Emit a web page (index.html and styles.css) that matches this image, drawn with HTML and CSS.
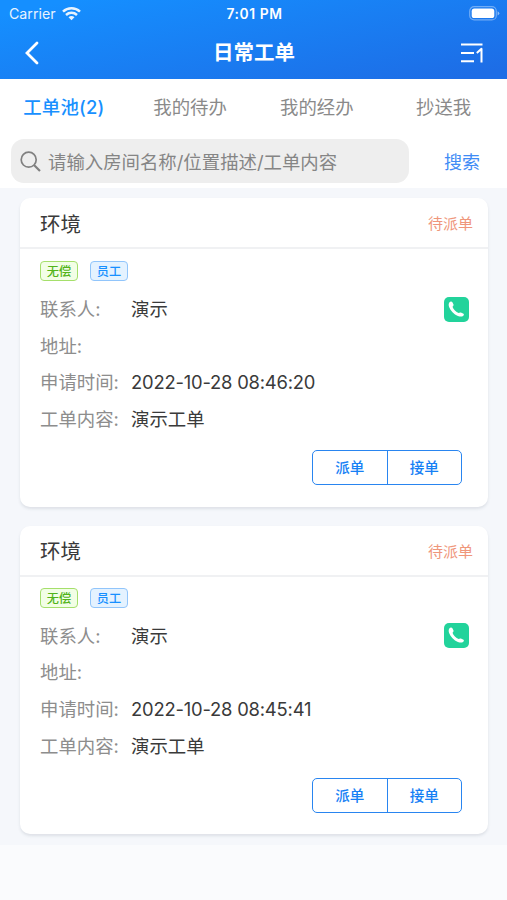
FILE: index.html
```html
<!DOCTYPE html>
<html lang="zh-CN">
<head>
<meta charset="utf-8">
<meta name="viewport" content="width=device-width, initial-scale=1">
<title>日常工单</title>
<link rel="stylesheet" href="styles.css">
</head>
<body>
<header class="header">
  <div class="status">
    <div class="carrier">
      <span>Carrier</span>
      <svg width="19" height="14" viewBox="0 0 19 14" fill="none" stroke="#fff" stroke-width="2.5"><path d="M1 4.700C5.800.2 13.200.2 18 4.700M4 8C7.200 5.100 11.800 5.100 15 8"/><path d="M6.500 10.200C8.300 8.700 10.700 8.700 12.500 10.200L9.500 13.300Z" fill="#fff" stroke="none"/></svg>
    </div>
    <span class="clock">7:01 PM</span>
    <svg class="battery" width="31" height="15" viewBox="0 0 31 15"><rect x=".7" y=".7" width="26.600" height="13.200" rx="4.500" fill="none" stroke="#fff" stroke-opacity=".38" stroke-width="1.200"/><rect x="2.700" y="2.600" width="22.600" height="9.400" rx="2.600" fill="#fff"/><path d="M28.600 5.200Q30.300 6 30.300 7.300T28.600 9.400Z" fill="#fff" opacity=".5"/></svg>
  </div>
  <div class="nav">
    <svg class="back" width="14" height="24" viewBox="0 0 14 24" fill="none" stroke="#fff" stroke-width="2.800" stroke-linecap="round"><path d="M12 2L2 12L12 22"/></svg>
    <h1 class="title">日常工单</h1>
    <svg class="sort" width="24" height="20" viewBox="0 0 24 20" fill="none" stroke="#fff" stroke-width="2" stroke-linejoin="round"><path d="M1 1.500H22.500M1 10H14M1 18.300H14M16.800 10L21.500 5.800V19.500"/></svg>
  </div>
</header>
<nav class="tabs">
  <span class="tab active">工单池(2)</span>
  <span class="tab">我的待办</span>
  <span class="tab">我的经办</span>
  <span class="tab">抄送我</span>
</nav>
<div class="search">
  <div class="field">
    <svg width="21" height="21" viewBox="0 0 21 21" fill="none" stroke="#808080" stroke-width="1.700"><circle cx="8.700" cy="8.700" r="7.500"/><path d="M14 14L20 20" stroke-width="2.200"/></svg>
    <span>请输入房间名称/位置描述/工单内容</span>
  </div>
  <span class="go">搜索</span>
</div>
<main class="list">
  <article class="card">
    <div class="card-head"><h2 class="kind">环境</h2><span class="state">待派单</span></div>
    <div class="tags"><span class="tag green">无偿</span><span class="tag blue">员工</span></div>
    <dl class="rows">
      <div class="row"><dt>联系人:</dt><dd>演示</dd><svg class="phone" width="25" height="25" viewBox="0 0 25 25"><rect width="25" height="25" rx="5" fill="#22d39b"/><path d="M5.300 5.500C6.200 4.300 7.700 4.300 8.400 5.200L9.500 7.600C9.800 8.400 9.300 9 8.500 9.800C9.400 12.500 12 15.200 14.600 16.100C15.400 15.500 16.100 15.300 16.900 15.500L19.500 16.700C20.200 17.300 20 18.300 19 19C17.700 19.900 15.900 19.700 13.900 18.900C9.900 17.200 6.500 13.800 5.100 9.900C4.500 8.200 4.500 6.700 5.300 5.500Z" fill="#fff"/></svg></div>
      <div class="row"><dt>地址:</dt><dd></dd></div>
      <div class="row"><dt>申请时间:</dt><dd class="date">2022-10-28 08:46:20</dd></div>
      <div class="row"><dt>工单内容:</dt><dd>演示工单</dd></div>
    </dl>
    <div class="actions"><span class="btn">派单</span><span class="btn">接单</span></div>
  </article>
  <article class="card">
    <div class="card-head"><h2 class="kind">环境</h2><span class="state">待派单</span></div>
    <div class="tags"><span class="tag green">无偿</span><span class="tag blue">员工</span></div>
    <dl class="rows">
      <div class="row"><dt>联系人:</dt><dd>演示</dd><svg class="phone" width="25" height="25" viewBox="0 0 25 25"><rect width="25" height="25" rx="5" fill="#22d39b"/><path d="M5.300 5.500C6.200 4.300 7.700 4.300 8.400 5.200L9.500 7.600C9.800 8.400 9.300 9 8.500 9.800C9.400 12.500 12 15.200 14.600 16.100C15.400 15.500 16.100 15.300 16.900 15.500L19.500 16.700C20.200 17.300 20 18.300 19 19C17.700 19.900 15.900 19.700 13.900 18.900C9.900 17.200 6.500 13.800 5.100 9.900C4.500 8.200 4.500 6.700 5.300 5.500Z" fill="#fff"/></svg></div>
      <div class="row"><dt>地址:</dt><dd></dd></div>
      <div class="row"><dt>申请时间:</dt><dd class="date">2022-10-28 08:45:41</dd></div>
      <div class="row"><dt>工单内容:</dt><dd>演示工单</dd></div>
    </dl>
    <div class="actions"><span class="btn">派单</span><span class="btn">接单</span></div>
  </article>
</main>
</body>
</html>
```
FILE: styles.css
```css
* { box-sizing: border-box; }
body {
  margin: 0;
  min-height: 900px;
  background: #fafbfd;
  font-family: Inter, "Noto Sans CJK SC", sans-serif;
  color: #3a3a3a;
}
h1, h2, dl, dt, dd { margin: 0; }
svg { display: block; flex: none; }
.header {
  height: 79px;
  color: #fff;
  background: linear-gradient(168deg, #158fff 8%, #1d6de6 94%);
}
.status, .nav {
  display: grid;
  grid-template-columns: 1fr auto 1fr;
  align-items: center;
}
.status { height: 27px; padding: 0 7px 0 9px; }
.carrier { display: flex; align-items: center; gap: 6px; font-size: 14.2px; opacity: .9; }
.clock { font-size: 13.8px; font-weight: 600; letter-spacing: .6px; }
.battery { justify-self: end; }
.nav { height: 51px; padding: 0 23px 0 24px; }
.back { margin-left: 1px; }
.title { font-size: 20.5px; line-height: 30px; font-weight: 700; }
.sort { justify-self: end; }
.tabs {
  display: grid;
  grid-template-columns: repeat(4, 1fr);
  align-items: center;
  height: 60px;
  padding-bottom: 5px;
  background: #fff;
  text-align: center;
  font-size: 18.4px;
  line-height: 28px;
  color: #8a8a8a;
}
.active { padding-left: 1px; color: #1890ff; font-weight: 500; letter-spacing: .2px; }
.search {
  display: flex;
  align-items: center;
  height: 49px;
  padding: 0 0 5px 11px;
  background: #fff;
}
.field {
  display: flex;
  align-items: center;
  gap: 7px;
  width: 398px;
  height: 44px;
  padding-left: 9px;
  border-radius: 13px;
  background: #eee;
  color: #858585;
  font-size: 18.4px;
  white-space: nowrap;
}
.go { flex: 1; padding-left: 8px; text-align: center; color: #3f8cf5; font-size: 18px; }
.list {
  display: grid;
  gap: 19px;
  height: 657px;
  padding: 10px 19px 0 20px;
  align-content: start;
  background: #f5f7fb;
}
.card {
  height: 308.5px;
  border-radius: 10px;
  background: #fff;
  box-shadow: 0 2px 3px rgba(60, 70, 90, .12);
}
.card-head {
  display: flex;
  align-items: center;
  justify-content: space-between;
  height: 51px;
  padding: 0 15px 0 20px;
  border-bottom: 2px solid #f0f1f3;
}
.kind { font-size: 20.5px; font-weight: 400; }
.card + .card .kind { margin-top: -1px; }
.state { color: #ef967b; font-size: 15px; }
.tags { display: flex; gap: 12px; padding: 12px 20px 10px; }
.card + .card .tags { padding: 11.500px 20px 9.500px; }
.tag {
  width: 38px;
  height: 20px;
  border: 1px solid;
  border-radius: 4px;
  text-align: center;
  font-size: 12.2px;
  line-height: 19px;
  font-weight: 500;
}
.green { color: #52b41a; background: #f2fee6; border-color: #a5df6b; }
.blue { color: #1890ff; background: #e4f2ff; border-color: #91c5fb; }
.row {
  display: flex;
  align-items: center;
  height: 36.6px;
  padding: 0 19px 0 20px;
  font-size: 18.4px;
  line-height: 28px;
  white-space: nowrap;
}
.row dt { width: 91px; color: #8d8d8d; }
.row dd { flex: 1; }
.date { letter-spacing: -.2px; }
.actions {
  display: flex;
  width: 150px;
  height: 35px;
  margin: 13px 26px 0 auto;
  border: 1px solid #2985f0;
  border-radius: 5px;
}
.card + .card .actions { margin-top: 14px; }
.btn {
  flex: 1;
  text-align: center;
  color: #1680f5;
  font-size: 14.6px;
  line-height: 34px;
  font-weight: 500;
}
.btn + .btn { border-left: 1px solid #2985f0; }
```
